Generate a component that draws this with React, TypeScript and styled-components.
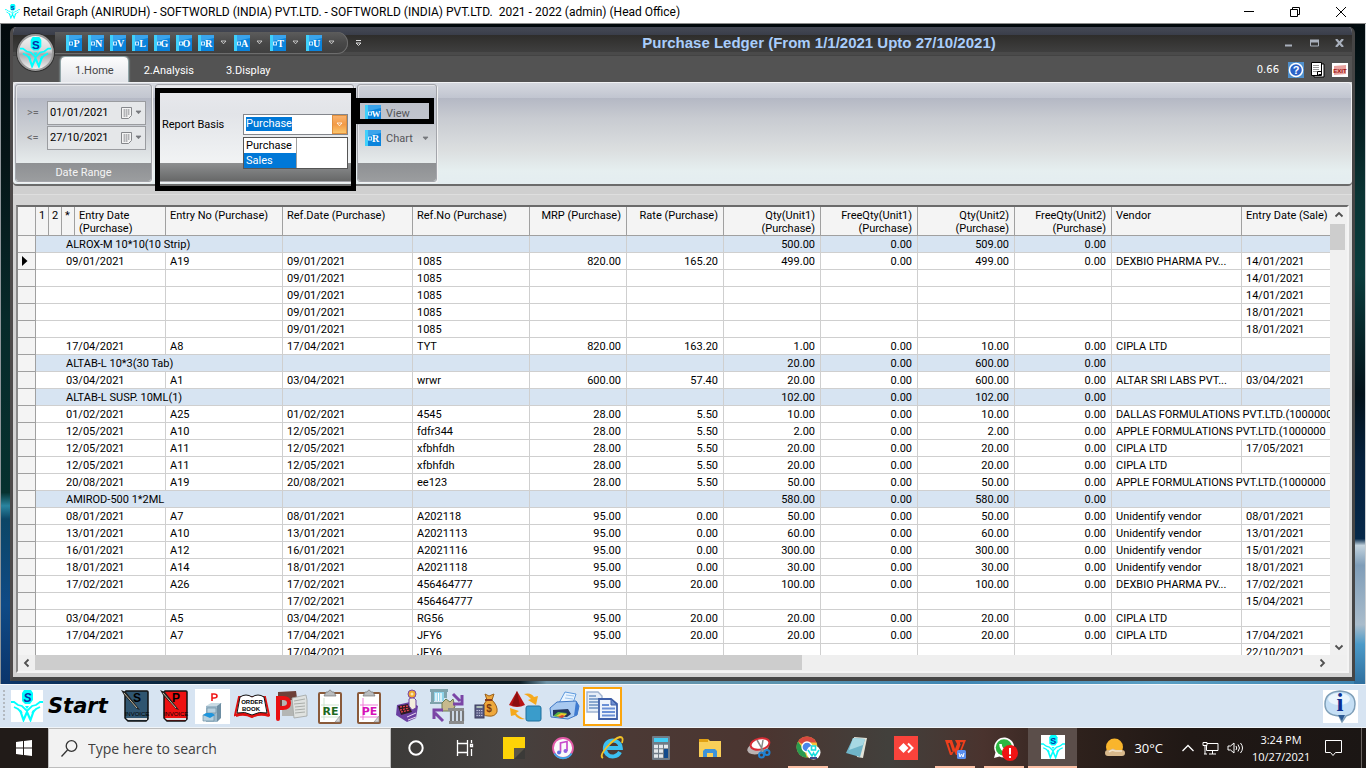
import React, { useEffect, useRef } from "react";
import styled, { createGlobalStyle, css } from "styled-components";

const GlobalStyle = createGlobalStyle`
  * { box-sizing: border-box; }
  body {
    margin: 0;
    font-family: Roboto, "Liberation Sans", sans-serif;
    font-size: 11px;
    color: #000;
  }
  button, input {
    font: inherit;
    color: inherit;
    margin: 0;
    padding: 0;
    border: 0;
    background: none;
  }
  svg { display: block; }
`;

const Desktop = styled.div`
  display: flex;
  flex-direction: column;
  height: 100vh;
  overflow: hidden;
`;

/* ---------- outer application window ---------- */

const AppTitleBar = styled.header`
  flex: none;
  display: flex;
  align-items: center;
  height: 24px;
  padding: 0 2px 0 5px;
  background: #fff;
  border-bottom: 1px solid #8a8a8a;
`;

const AppTitle = styled.h1`
  flex: 1;
  margin: 0;
  padding-left: 3px;
  font: 400 12px Roboto, "Open Sans", sans-serif;
  white-space: nowrap;
`;

const WindowButton = styled.button`
  display: grid;
  place-items: center;
  width: 46px;
  height: 22px;
`;

const MdiArea = styled.main`
  flex: 1;
  min-height: 0;
  display: flex;
  padding: 3px 10px 3px 9px;
  border-left: 1px solid #8d9499;
  border-right: 1px solid #c9cdd0;
  background:
    linear-gradient(#020b0e 0%, #04191c 12%, #0a3434 26%, #0a3c3c 38%, #062428 48%, #03121a 56%, #05203c 66%, #06294a 78%, #c3d3de 79%, #7f9db8 82%, #a9bccb 91%, #4b9ac8 94%, #2f6f9e 100%) right / 11px 100% no-repeat,
    linear-gradient(#020a0d 0%, #051517 20%, #072a2a 45%, #06312f 71%, #2a85a0 73%, #0c4666 75%, #0f4a86 88%, #0b356b 100%) left / 10px 100% no-repeat,
    linear-gradient(90deg, #0b356b 0%, #0a2438 14%, #06161e 30%, #0a1a22 38%, #6f94a8 40%, #5a94b0 58%, #3f86b4 70%, #5b9fc4 85%, #3c83b0 100%) bottom / 100% 3px no-repeat,
    #02090c;
`;

/* ---------- ledger window ---------- */

const LedgerWindow = styled.section`
  flex: 1;
  min-width: 0;
  display: flex;
  flex-direction: column;
  border: solid #454545;
  border-width: 0 3px 4px;
  border-left-color: #4d4a4a;
  border-radius: 6px 6px 0 0;
  background: #d3d3d3;
  overflow: hidden;
`;

const LedgerTitleBar = styled.div`
  position: relative;
  z-index: 1;
  flex: none;
  display: flex;
  align-items: center;
  height: 29px;
  margin: 0 -3px;
  padding: 2px 3px 0 45px;
  background: linear-gradient(#464a56 0, #3a3e4a 8px, #2e2d2b 8px, #3f3f3f 25px, #4a4a4a 25px, #4a4a4a 28px, #434343 28px);
`;

const Orb = styled.button`
  position: absolute;
  left: 7px;
  top: 7px;
  display: grid;
  place-items: center;
  width: 37px;
  height: 37px;
  border: 2px solid #9b9b9b;
  border-radius: 50%;
  background: linear-gradient(#f4f4f4 0, #d5d5d7 45%, #a9a9ad 55%, #f2f2f2 100%);
  box-shadow: 0 0 0 1px #2e2e2e;
`;

const QuickAccess = styled.div`
  display: flex;
  align-items: center;
  width: 293px;
  height: 22px;
  padding-left: 11px;
  border-radius: 0 12px 12px 0;
  background: linear-gradient(#5c5c5c, #484848 50%, #3f3f3f);
  box-shadow: inset 0 -1px 0 #6d6d6d, inset -1px 0 0 #6d6d6d;
`;

const QuickButton = styled.button<{ $menu?: boolean }>`
  display: flex;
  align-items: center;
  gap: 6px;
  width: ${(p) => (p.$menu ? 36 : 22)}px;
  height: 18px;
`;

const OverflowButton = styled.button`
  padding-left: 7px;
`;

const LedgerTitle = styled.h2`
  flex: 1;
  margin: 0;
  text-align: center;
  font: 700 15px "Liberation Sans", Arial, sans-serif;
  color: #a9cdfb;
  white-space: nowrap;
`;

const FrameButtons = styled.div`
  display: flex;
  width: 76px;
  justify-content: space-between;
`;

const FrameButton = styled.button`
  display: grid;
  place-items: center;
  width: 25px;
  height: 16px;
`;

const TabRow = styled.nav`
  flex: none;
  display: flex;
  align-items: stretch;
  height: 26px;
  padding: 1px 4px 0 48px;
  background: #535353;
`;

const Tab = styled.button<{ $active?: boolean }>`
  padding: 1px 16px 0;
  color: #fff;
  ${(p) =>
    p.$active &&
    css`
      padding: 1px 14px 0;
      color: #444;
      border-radius: 4px 4px 0 0;
      background: linear-gradient(#fdfdfd, #e3e5ea);
      box-shadow: 0 0 2px 1px #a7c3c6;
    `}
`;

const TabTools = styled.div`
  display: flex;
  align-items: center;
  gap: 6px;
  margin-left: auto;
  color: #fff;
  font: 10px "DejaVu Sans", sans-serif;
`;

const Version = styled.span`
  padding-right: 3px;
`;

const ToolButton = styled.button`
  width: 16px;
  height: 16px;
`;

const Ribbon = styled.div`
  position: relative;
  flex: none;
  display: flex;
  gap: 3px;
  height: 102px;
  padding: 1px 1px 2px;
  border: solid #f0f1f3;
  border-width: 1px 1px 0;
  border-radius: 4px;
  background: linear-gradient(#d5d8df 0, #c1c5d0 15px, #b4b8c4 15px, #c8cbd1 35px, #dcdfe0 68px, #e6eff0 88px, #e4edf0 100%);
  box-shadow: 0 2px 0 #6b6b6b;
`;

const RibbonGroup = styled.section<{ $w: number; $light?: boolean }>`
  position: relative;
  display: flex;
  flex-direction: column;
  width: ${(p) => p.$w}px;
  border: 1px solid #a3a5ab;
  border-radius: 3px;
  background: ${(p) =>
    p.$light
      ? "linear-gradient(#e9eaee, #e2e4e8 30%, #f1f3f4 80%)"
      : "linear-gradient(#d0d3da 0, #c2c6d0 13px, #b5b9c5 13px, #cfd2d6 50px, #e6ebec 78px)"};
  box-shadow: inset 1px 1px 0 #e3e4e8, 1px 1px 0 #f2f2f2;
`;

const GroupBody = styled.div`
  flex: 1;
  display: flex;
  flex-direction: column;
`;

const GroupCaption = styled.div<{ $dark?: boolean }>`
  flex: none;
  height: 18px;
  line-height: 19px;
  text-align: center;
  font-size: 11px;
  color: #f4f4f4;
  border-radius: 0 0 3px 3px;
  background: ${(p) => (p.$dark ? "linear-gradient(#8d8f90, #676868)" : "linear-gradient(#8e9093, #9b9d9f)")};
`;

const DateRows = styled.div`
  padding-top: 15px;
`;

const DateRow = styled.label`
  display: grid;
  grid-template-columns: 31px 99px;
  align-items: center;
  height: 25px;
  color: #6a6a6e;
`;

const Sign = styled.span`
  padding-left: 11px;
`;

const DateBox = styled.span`
  display: flex;
  align-items: center;
  height: 24px;
  border: 1px solid #9a9ca0;
  background: #e5e7e9;
`;

const DateInput = styled.input`
  width: 73px;
  padding-left: 2px;
  color: #000;
  outline: none;
`;

const CalendarButton = styled.button`
  display: flex;
  align-items: center;
  gap: 3px;
`;

const BasisLabel = styled.label`
  display: flex;
  align-items: center;
  justify-content: space-between;
  margin: 29px 5px 0 6px;
`;

const Combo = styled.span`
  position: relative;
  display: flex;
  width: 105px;
  height: 21px;
  border: 1px solid #83868c;
  background: #fff;
`;

const ComboInput = styled.input`
  flex: 1;
  min-width: 0;
  height: 14px;
  line-height: 14px;
  margin: 2px 0 0 2px;
  outline: none;
  &::selection { background: #0078d7; color: #fff; }
`;

const ComboArrow = styled.button`
  display: grid;
  place-items: center;
  width: 15px;
  background: linear-gradient(#f9b26d, #f39a45 50%, #fbc66c);
  border: 1px solid #e0903f;
`;

const ComboList = styled.ul`
  position: absolute;
  z-index: 3;
  top: 22px;
  left: -1px;
  width: 105px;
  margin: 0;
  padding: 0;
  list-style: none;
  border: 1px solid #555;
  background: linear-gradient(90deg, transparent 52px, #a0a0a0 52px, #a0a0a0 53px, transparent 53px) #fff;
`;

const ComboOption = styled.li<{ $selected?: boolean }>`
  width: 52px;
  height: 15px;
  line-height: 15px;
  padding-left: 2px;
  background: ${(p) => (p.$selected ? "#0078d7" : "transparent")};
  color: ${(p) => (p.$selected ? "#fff" : "#000")};
`;

const Commands = styled.div`
  display: flex;
  flex-direction: column;
  padding-top: 15px;
`;

const CommandButton = styled.button<{ $hot?: boolean }>`
  display: flex;
  align-items: center;
  gap: 5px;
  height: 25px;
  padding: 1px 0 0 7px;
  color: #55565a;
  background: ${(p) => (p.$hot ? "linear-gradient(#bcc0ca, #c3c6cf)" : "none")};
`;

const CommandArrow = styled.span`
  margin-left: 4px;
`;

/* thick marker frames laid over the ribbon */
const Marker = styled.span<{ $box: [number, number, number, number] }>`
  position: absolute;
  z-index: 2;
  pointer-events: none;
  border: 5px solid #000;
  left: ${(p) => p.$box[0]}px;
  top: ${(p) => p.$box[1]}px;
  width: ${(p) => p.$box[2]}px;
  height: ${(p) => p.$box[3]}px;
`;

/* ---------- data grid ---------- */

const GridPane = styled.div`
  flex: 1;
  min-height: 0;
  display: flex;
  margin-top: 2px;
  padding: 19px 3px 4px;
  background: linear-gradient(#cfcfcf 8px, #dedede 8px, #dedede 9px, #d3d3d3 9px);
`;

const GridFrame = styled.div`
  flex: 1;
  min-width: 0;
  display: grid;
  grid-template: minmax(0, 1fr) 16px / minmax(0, 1fr) 17px;
  border: 2px solid;
  border-color: #6b6b6b #f4f4f4 #f4f4f4 #8a8a8a;
  background: #efefef;
`;

const GridView = styled.div`
  overflow: hidden;
  background: #fff;
`;

const Table = styled.table`
  width: 1341px;
  table-layout: fixed;
  border-collapse: separate;
  border-spacing: 0;
  white-space: nowrap;
`;

const HeadCell = styled.th<{ $num?: boolean; $slim?: boolean }>`
  height: 29px;
  padding: ${(p) => (p.$slim ? "2px 2px 0 3px" : "2px 5px 0 4px")};
  vertical-align: top;
  text-align: ${(p) => (p.$num ? "right" : "left")};
  font-weight: 400;
  line-height: 13px;
  white-space: pre-line;
  background: #f4f4f4;
  border-right: 1px solid #a0a0a0;
  border-bottom: 1px solid #a0a0a0;
`;

const RowHead = styled.th`
  padding: 0 0 0 4px;
  background: #f4f4f4;
  border-right: 1px solid #a0a0a0;
  border-bottom: 1px solid #a0a0a0;
`;

const Row = styled.tr<{ $group?: boolean }>`
  background: ${(p) => (p.$group ? "#d7e4f2" : "#fff")};
`;

const Cell = styled.td<{ $num?: boolean; $first?: boolean }>`
  height: 17px;
  padding: 2px 5px 0 ${(p) => (p.$first ? 30 : 4)}px;
  line-height: 14px;
  text-align: ${(p) => (p.$num ? "right" : "left")};
  overflow: hidden;
  border-right: 1px solid #cfcfcf;
  border-bottom: 1px solid #cfcfcf;
`;

const VScroll = styled.div`
  display: flex;
  flex-direction: column;
  padding-right: 1px;
  background: #f0f0f0;
`;

const HScroll = styled.div`
  grid-column: 1 / -1;
  display: flex;
  padding-right: 17px;
  background: #efefef;
`;

const ScrollButton = styled.button`
  flex: none;
  display: grid;
  place-items: center;
  width: 17px;
  height: 16px;
`;

const VTrack = styled.div`
  flex: 1;
  padding-top: 1px;
`;

const HTrack = styled.div`
  flex: 1;
`;

const VThumb = styled.div`
  width: 15px;
  height: 26px;
  background: #cdcdcd;
`;

const HThumb = styled.div`
  width: 60%;
  height: 15px;
  background: #cdcdcd;
`;

/* ---------- shortcut bar and taskbar ---------- */

const ShortcutBar = styled.nav`
  flex: none;
  display: flex;
  align-items: center;
  height: 44px;
  padding: 0 8px 0 3px;
  background: #d7e4f2;
  border-top: 1px solid #f3f7fb;
  border-bottom: 1px solid #f0f4f8;
`;

const Grip = styled.span`
  width: 8px;
  height: 32px;
  background: repeating-linear-gradient(#b3b9c0 0 2px, transparent 2px 4px) left / 2px 100% no-repeat;
`;

const StartButton = styled.button`
  display: flex;
  align-items: center;
  gap: 5px;
  width: 104px;
  font: italic 700 21px "DejaVu Sans", Verdana, sans-serif;
`;

const Shortcut = styled.button<{ $on?: boolean }>`
  display: grid;
  place-items: center;
  width: 39px;
  height: 39px;
  ${(p) => p.$on && css`border: 2px solid #fba50e; background: #fdfdfd;`}
`;

const InfoButton = styled.button`
  margin-left: auto;
`;

const Taskbar = styled.footer`
  flex: none;
  display: flex;
  height: 40px;
  color: #fff;
  font-family: "Open Sans", "Noto Sans", sans-serif;
  background: linear-gradient(90deg, #211b18 0%, #211b18 4%, #3c3b39 28.6%, #45413f 37%, #4b3a36 44%, #4b3530 56%, #42403c 65%, #4a332e 72%, #2e211c 79%, #201815 87%, #1b1614 100%);
`;

const WinButton = styled.button`
  display: grid;
  place-items: center;
  width: 48px;
`;

const SearchBox = styled.label`
  display: flex;
  align-items: center;
  gap: 10px;
  width: 343px;
  padding-left: 12px;
  border: 1px solid #bdbdbd;
  background: #f2f2f2;
  color: #3c3c3c;
`;

const SearchInput = styled.input`
  flex: 1;
  font: 14px "Open Sans", "Noto Sans", sans-serif;
  outline: none;
  &::placeholder { color: #3f3f3f; opacity: 1; }
`;

const TaskButton = styled.button<{ $state?: "open" | "active" }>`
  display: grid;
  place-items: center;
  width: 49px;
  ${(p) =>
    p.$state === "open" &&
    css`background: linear-gradient(#fbbfa4, #fbbfa4) center bottom / 40px 2px no-repeat;`}
  ${(p) => p.$state === "active" && css`background: #5b4e4a; border-bottom: 2px solid #fbbfa4;`}
`;

const Tray = styled.div`
  flex: 1;
  display: flex;
  align-items: center;
  justify-content: flex-end;
  gap: 8px;
  padding-right: 4px;
`;

const TrayButton = styled.button<{ $wide?: boolean }>`
  display: flex;
  align-items: center;
  gap: 9px;
  padding-right: ${(p) => (p.$wide ? 11 : 0)}px;
  font-size: 13px;
`;

const Clock = styled.time`
  width: 58px;
  margin-right: 7px;
  text-align: center;
  font-size: 11px;
  line-height: 17px;
  white-space: nowrap;
`;

const ShowDesktop = styled.button`
  align-self: stretch;
  width: 1px;
  margin-left: 11px;
  background: #6a6461;
`;

/* ---------- drawings ---------- */

const Logo = ({ size, paper }: { size: number; paper?: boolean }) => (
  <svg width={size} height={size} viewBox="0 0 32 32" aria-hidden="true">
    {paper && <rect width="32" height="32" fill="#fff" />}
    <path d="M13 0h7l2 3v7l-3 4h-5l-3-3V3z" fill="#0ff" />
    <path d="M0 12h3l4 3 4 1 5 5 5-5 4-1 4-3h3M3 17l4 2 4 4M29 17l-4 2-4 4" fill="none" stroke="#0ff" strokeWidth="1.800" />
    <path d="M9 20l3.500 10L16 22l3.500 8L23 20" fill="none" stroke="#0ff" strokeWidth="2.200" />
    <path d="M14 16h4l-2 3z" fill="#0ff" />
    <text x="16.500" y="12" textAnchor="middle" fontFamily="Liberation Sans, sans-serif" fontWeight="700" fontSize="12" fill="#0a2fa8">S</text>
  </svg>
);

const BlueIcon = ({ letter }: { letter: string }) => (
  <svg width="16" height="16" viewBox="0 0 16 16" aria-hidden="true">
    <rect width="16" height="16" fill="#0b84dc" />
    <rect width="3" height="16" fill="#3fd0fb" />
    <path d="M3 0h13v3L3 6z" fill="#3aa4ec" />
    <rect x="3.500" y="7" width="3" height="3" fill="none" stroke="#cfeaff" strokeWidth="1" />
    <text x={letter === "W" ? 11 : 10.5} y="11.500" textAnchor="middle" fontFamily="Liberation Serif, serif" fontWeight="700" fontSize={letter === "W" ? 9 : 10} fill="#fff">{letter}</text>
  </svg>
);

const Caret = ({ color = "#ddd", hollow }: { color?: string; hollow?: boolean }) => (
  <svg width="7" height="5" viewBox="0 0 7 5" aria-hidden="true">
    <path d="M1 1h5L3.500 3.800z" fill={hollow ? "none" : color} stroke={color} strokeWidth="0.800" />
  </svg>
);

const Chevron = ({ dir }: { dir: "up" | "down" | "left" | "right" }) => {
  const turn = { up: 0, right: 90, down: 180, left: 270 }[dir];
  return (
    <svg width="10" height="10" viewBox="0 0 10 10" aria-hidden="true">
      <path d="M1.500 6.500L5 3l3.500 3.500" fill="none" stroke="#505050" strokeWidth="1.800" transform={`rotate(${turn} 5 5)`} />
    </svg>
  );
};

const Calendar = () => (
  <svg width="11" height="12" viewBox="0 0 11 12" aria-hidden="true">
    <path d="M.5.500h10v8l-3 3h-7z" fill="#f3f3f3" stroke="#85878b" />
    <path d="M2 3h7M2 5h7M2 7h7M2 9h5M3.500 2v8M5.500 2v8M7.500 2v6" stroke="#a9abaf" strokeWidth=".8" />
  </svg>
);

const Invoice = ({ fill, letter, ink }: { fill: string; letter: string; ink: string }) => (
  <svg width="30" height="34" viewBox="0 0 30 34">
    <path d="M6 2h21q1 0 1 1v27l-2 2H8l-3-3V3z" fill={fill} stroke="#111" strokeWidth="1.500" />
    <path d="M6 29h21v2H8z" fill="#ddd" />
    <text x="17" y="13" textAnchor="middle" fontFamily="Liberation Sans, sans-serif" fontWeight="700" fontSize="12" fill={ink}>{letter}</text>
    <text x="17" y="27" textAnchor="middle" fontFamily="Liberation Sans, sans-serif" fontSize="6" fill="#000">INVOICE</text>
    <path d="M1 1l5 2 14 18-3-1L4 6z" fill="#222" />
    <path d="M4 4l13 15" stroke="#c9bfa4" strokeWidth="1" />
  </svg>
);

const Clipboard = ({ label, ink, line }: { label: string; ink: string; line: string }) => (
  <svg width="24" height="35" viewBox="0 0 24 35">
    <rect x="1" y="4" width="22" height="30" rx="1" fill="#fff" stroke="#8a5a3a" strokeWidth="2" />
    <path d="M6 7l2-4h2q2-4 4 0h2l2 4z" fill="#b9bcbe" stroke="#777" strokeWidth=".7" />
    <path d="M3 16h18M3 28h18M6 9v22" stroke={line} strokeWidth="1" />
    <path d="M17 33l5-6v6z" fill="#d5d5d5" stroke="#888" strokeWidth=".6" />
    <text x="12.500" y="26" textAnchor="middle" fontFamily="DejaVu Sans, sans-serif" fontWeight="700" fontSize="11" fill={ink}>{label}</text>
  </svg>
);

const CabinetIcon = () => (
  <svg width="35" height="35" viewBox="0 0 35 35">
    <rect width="35" height="35" fill="#fff" />
    <path d="M11 17l5-3h11l-3 3z" fill="#c9dbe4" />
    <path d="M22 17l4-3v15l-4 4z" fill="#6d8ea3" />
    <path d="M11 17h11v16H11z" fill="#9db9ca" />
    <path d="M12 19h9v5h-9zM8 26h11v6H8z" fill="#b7d0de" stroke="#6f8fa3" strokeWidth=".7" />
    <path d="M8 26l3-2h6l3 2-5 3z" fill="#1f95dc" />
    <path d="M17 12V5h2q3 0 3 2t-3 2h-2" fill="none" stroke="#f01818" strokeWidth="1.600" />
  </svg>
);

const OrderBook = () => (
  <svg width="36" height="24" viewBox="0 0 36 24">
    <path d="M5 3L1 21q8-3 17 1 9-4 17-1L31 3z" fill="#fff" stroke="#e01010" strokeWidth="2" />
    <path d="M6 3q6-4 12 0 6-4 12 0l3 16q-8-2-15 2-7-4-15-2z" fill="#fff" stroke="#111" strokeWidth="1" />
    <text x="18" y="10" textAnchor="middle" fontFamily="Liberation Sans, sans-serif" fontWeight="700" fontSize="6" fill="#000">ORDER</text>
    <text x="17" y="17" textAnchor="middle" fontFamily="Liberation Sans, sans-serif" fontWeight="700" fontSize="6" fill="#000">BOOK</text>
    <path d="M2 22q8-3 16 1 8-4 17-1" fill="none" stroke="#e01010" strokeWidth="2" />
  </svg>
);

const PurchaseIcon = () => (
  <svg width="34" height="30" viewBox="0 0 34 30">
    <path d="M4 1l18-1 1 7-5 1v8H4z" fill="#6e4038" />
    <path d="M8 9h12v16H8z" fill="#b4b6b4" />
    <path d="M18 7l14-3 1 5v16l-13 2z" fill="#dfe2e0" stroke="#9fa3a1" strokeWidth=".8" />
    <path d="M20 10l11-2M20 13l11-1M21 16l10-1M21 19l10-1M21 22l10-1" stroke="#a9ada9" />
    <path d="M4 28V7h5q6 0 6 5t-6 5H5" fill="none" stroke="#e90f12" strokeWidth="4" strokeLinecap="round" />
  </svg>
);

const RegisterIcon = () => (
  <svg width="25" height="34" viewBox="0 0 25 34">
    <path d="M2 16l13-3 8 4-2 12-9 4L1 26z" fill="#6a3fa0" />
    <path d="M3 17l10-2 4 8-11 3z" fill="#2c1a22" />
    <path d="M5 18l8-1M5 21l9-2M6 23l9-2" stroke="#e2434c" strokeWidth="1.300" strokeDasharray="2 1" />
    <path d="M12 28l9-4M13 31l8-3" stroke="#e7d5ef" />
    <path d="M14 10q4-3 7 1v8l-4 2-3-4z" fill="#f3eedd" stroke="#6a3fa0" />
    <circle cx="17" cy="5" r="4" fill="#f1a92e" stroke="#7a45a4" />
    <circle cx="17" cy="5" r="1.500" fill="#f7e6b0" />
  </svg>
);

const TransferIcon = () => (
  <svg width="36" height="36" viewBox="0 0 36 36">
    <path d="M1 1h18v3H1zM2 4h3v11H2zM15 4h3v6h-3zM1 14h12v2H1z" fill="#7fa3ac" />
    <path d="M5 4h10v9H5z" fill="#8ed3ea" />
    <path d="M7 5v8M9.500 5v8M12 5v8" stroke="#fff" strokeWidth="1.300" />
    <path d="M13 15l4-4 4 3 3-3 2 8-5 4h-8z" fill="#c7b98d" stroke="#6d7c50" />
    <path d="M24 6l7 7M33 7v9h-9M14 33l-8-8M5 31v-9h9" fill="none" stroke="#7b45a6" strokeWidth="3" />
    <path d="M19 20h16v3H19zM20 33h15v3H20z" fill="#8c8c8c" />
    <path d="M22 23v10M26 23v10M30 23v10M34 23v10" stroke="#777" strokeWidth="2.200" />
  </svg>
);

const MoneyIcon = () => (
  <svg width="24" height="26" viewBox="0 0 24 26">
    <path d="M11 1l4 2 5-2-2 6q6 6 5 12-2 5-9 4-6 0-6-6 1-6 5-10z" fill="#efa83c" stroke="#9a611c" />
    <path d="M11 7h7" stroke="#8a3d1a" strokeWidth="2" />
    <text x="15" y="19" textAnchor="middle" fontFamily="Liberation Sans, sans-serif" fontWeight="700" fontSize="10" fill="#7c3a10">$</text>
    <rect x="1" y="12" width="9" height="13" fill="#5a5d86" stroke="#3b3d5c" />
    <path d="M2.500 14h6" stroke="#c4dbc4" strokeWidth="1.600" />
    <path d="M2.500 17.500h6M2.500 20h6M2.500 22.500h6" stroke="#c8cae0" strokeDasharray="1.300 1" />
  </svg>
);

const ShapesIcon = () => (
  <svg width="34" height="32" viewBox="0 0 34 32">
    <path d="M9 1l8 14q-8 4-16 0z" fill="#b91414" />
    <path d="M9 1l3 15q-6 1-8-1z" fill="#8a0f0f" />
    <rect x="18" y="16" width="15" height="15" rx="2" fill="#3a9ccb" stroke="#1f6f9c" />
    <path d="M16 4q7-2 10 3l4-1-2 9-8-5 3-1q-2-3-7-5z" fill="#f5a91c" />
    <path d="M17 29q-7 1-10-4l-4 1-1-8 9 3-3 2q3 4 9 6z" fill="#f5a91c" />
  </svg>
);

const PrinterIcon = () => (
  <svg width="32" height="30" viewBox="0 0 32 30">
    <path d="M11 12L17 1l11 2-4 12z" fill="#e9f4ff" stroke="#5e9ade" />
    <path d="M2 17l7-6 19-1 3 5-2 9-9 4-17-2z" fill="#a8c9f0" stroke="#3f77c4" />
    <path d="M28 10l3 5-2 9-3 1z" fill="#3e7ad0" />
    <path d="M5 19l15-1 3 5-4 3-14-1z" fill="#22345c" />
    <path d="M5 25l5-4 9 1-4 5z" fill="#58b347" />
    <path d="M8 25l5-3 6 1-4 3z" fill="#f0c52c" />
    <path d="M10 26l4-2 3 1-3 2z" fill="#d43d3d" />
    <path d="M18 4l8 1M17 7l8 1" stroke="#9cc3ec" />
  </svg>
);

const CopyIcon = () => (
  <svg width="33" height="30" viewBox="0 0 33 30">
    <path d="M1 1h11l4 4v16H1z" fill="#e6eef8" stroke="#9fb2cf" strokeWidth="1.400" />
    <path d="M3 5h7M3 8h10M3 11h10M3 14h9M3 17h9" stroke="#8aa8cf" strokeWidth="1.800" />
    <path d="M13 8h12l6 5v15H13z" fill="#eef4fc" stroke="#3f5fa8" strokeWidth="1.800" />
    <path d="M25 8v6h6z" fill="#6f8fd0" stroke="#3f5fa8" />
    <path d="M16 14h7M16 17.500h13M16 21h13M16 24.500h13" stroke="#6a90d6" strokeWidth="2.200" />
  </svg>
);

const InfoIcon = () => (
  <svg width="35" height="33" viewBox="0 0 35 33">
    <rect width="35" height="33" fill="#fff" />
    <path d="M17 1q15 1 15 13 0 10-9 12l-4 6-3-6Q2 25 2 14 2 2 17 1z" fill="#c5dff5" stroke="#7f9fb8" strokeWidth="1.500" />
    <path d="M15 25h7l-3 6z" fill="#2c5b94" />
    <ellipse cx="16" cy="9" rx="11" ry="6" fill="#eaf5fd" />
    <text x="17" y="21" textAnchor="middle" fontFamily="Liberation Serif, serif" fontWeight="700" fontSize="25" fill="#0c2f92">i</text>
  </svg>
);

const HelpIcon = () => (
  <svg width="16" height="16" viewBox="0 0 16 16">
    <rect width="16" height="16" fill="#4f8fcb" />
    <circle cx="8" cy="8" r="6.500" fill="#2a62c8" stroke="#fff" strokeWidth="1.500" />
    <text x="8" y="12" textAnchor="middle" fontFamily="Liberation Sans, sans-serif" fontWeight="700" fontSize="11" fill="#fff">?</text>
  </svg>
);

const PagesIcon = () => (
  <svg width="15" height="16" viewBox="0 0 15 16">
    <path d="M4 2h10v13H4z" fill="#fff" stroke="#000" />
    <path d="M1.500.500h10v13h-10z" fill="#fff" stroke="#000" />
    <path d="M3 3.500h6M3 5.500h6M3 7.500h6M3 9.500h4" stroke="#999" />
    <path d="M7.500 13.500v-4h4v3h-3" fill="none" stroke="#000" />
  </svg>
);

const ExitIcon = () => (
  <svg width="16" height="14" viewBox="0 0 16 14">
    <rect width="16" height="14" fill="#fff" />
    <path d="M2 3l12-1v9l-12 1z" fill="#e9a3a0" />
    <text x="8" y="9.500" textAnchor="middle" fontFamily="Liberation Sans, sans-serif" fontWeight="700" fontSize="6" fill="#a01414">EXIT</text>
  </svg>
);

const TaskIcon = ({ name }: { name: string }) => {
  const art: Record<string, React.ReactNode> = {
    Cortana: <circle cx="12" cy="12" r="6.700" fill="none" stroke="#fff" strokeWidth="2" />,
    "Task View": (
      <path d="M4.500 4v3.500h10V4M4.500 20v-3.500h10V20M4.500 7.500v9M14.500 7.500v9M18.500 4v3M18.500 13v7M17.500 8.500h2v2h-2z" fill="none" stroke="#fff" strokeWidth="1.300" />
    ),
    "Sticky Notes": (
      <>
        <path d="M1 1h22v11l-11 11H1z" fill="#fdd307" />
        <path d="M12 12h11v11H12z" fill="#3b3a38" />
        <path d="M12 12h11L12 23z" fill="#5a5548" />
      </>
    ),
    iTunes: (
      <>
        <circle cx="12" cy="12" r="10" fill="#fafafa" stroke="#e25aa8" strokeWidth="1.800" />
        <path d="M3.500 17.500A10 10 0 0020.500 17.500" fill="none" stroke="#38a8e8" strokeWidth="1.800" />
        <path d="M9.500 16.500V7l6.500-1.500v9.500" fill="none" stroke="#c84ccc" strokeWidth="1.700" />
        <circle cx="8" cy="16.500" r="2" fill="#5f6fe0" />
        <circle cx="14.500" cy="15" r="2" fill="#8f5fe0" />
      </>
    ),
    "Internet Explorer": (
      <>
        <path d="M20 16a8 8 0 11.800-4H7" fill="none" stroke="#3cc0f2" strokeWidth="4" />
        <path d="M3 22Q-1 20 7 11T20 1q4 0 2 6" fill="none" stroke="#f5c426" strokeWidth="1.800" />
      </>
    ),
    Calculator: (
      <>
        <rect x="3" width="18" height="24" rx="1" fill="#6f7b87" />
        <rect x="5" y="2" width="14" height="4" fill="#43cdf5" />
        <path d="M5 10.500h14M5 15h14M5 20h14" stroke="#e3e8ec" strokeWidth="3.600" strokeDasharray="4 1" />
        <rect x="15" y="13" width="4" height="9" fill="#114a8c" />
      </>
    ),
    "File Explorer": (
      <>
        <path d="M1 3h9l2 2h11v16H1z" fill="#f9cf58" />
        <path d="M1 3h9v3H1z" fill="#e1a113" />
        <path d="M5 21v-6l2-2h10l2 2v6h-4v-4H9v4z" fill="#3d93d9" />
      </>
    ),
    "Snipping Tool": (
      <>
        <ellipse cx="11" cy="12" rx="11" ry="6" fill="#b9b2b2" transform="rotate(-15 11 12)" />
        <ellipse cx="13" cy="8" rx="9.500" ry="5.500" fill="#fff" stroke="#d82c35" strokeWidth="2" transform="rotate(-12 13 8)" />
        <path d="M10 4l7 12M16 4l-2 12" stroke="#888" strokeWidth="1.500" />
        <circle cx="14.500" cy="19" r="2.500" fill="none" stroke="#2183d2" strokeWidth="2" />
        <circle cx="20" cy="16.500" r="2.500" fill="none" stroke="#2183d2" strokeWidth="2" />
      </>
    ),
    Chrome: (
      <>
        <circle cx="11" cy="11" r="10.500" fill="#f4c33a" />
        <path d="M11 11L2 5.500A10.500 10.500 0 0120.500 6.500H11z" fill="#d8493f" />
        <path d="M2 5.500L8 14l3 7.500A10.500 10.500 0 012 5.500z" fill="#2a9a50" />
        <circle cx="11" cy="11" r="5" fill="#4a86ea" stroke="#fff" strokeWidth="1.300" />
        <circle cx="17.500" cy="16.500" r="7" fill="#fff" />
        <path d="M15.500 10h4v4h-4zM12 14l4 6 1.500-3 1.500 3 4-6" fill="none" stroke="#17dede" strokeWidth="1.600" />
        <path d="M14 22h7" stroke="#0f1c6a" strokeWidth="1.600" />
      </>
    ),
    Notepad: (
      <>
        <path d="M9 1l13 1-4 20-6-1z" fill="#e2e3d8" />
        <path d="M8 2l12 1-5 18-14-4z" fill="#6fb5c9" />
        <path d="M8 2l12 1-2 6L4 14z" fill="#a8d9e4" />
      </>
    ),
    AnyDesk: (
      <>
        <rect width="24" height="24" fill="#f9433b" />
        <path d="M9.500 7l5 5-5 5-5-5z" fill="#fff" />
        <path d="M14 7.500l4.500 4.500-4.500 4.500" fill="none" stroke="#fff" strokeWidth="2" />
      </>
    ),
    WPS: (
      <>
        <path d="M2 4h7l3 9 2-5-2-4h11l-6 15h-4l-2-4-2 4H7z" fill="#ee3f1c" />
        <path d="M6 7l3 9M17 7h2l-3 8" fill="none" stroke="#4a332e" strokeWidth="1.600" />
        <rect x="14" y="14" width="9" height="9" rx="1.500" fill="#5a8ff0" />
        <path d="M16 17l1 4 1.500-3 1.500 3 1-4" fill="none" stroke="#fff" />
      </>
    ),
    WhatsApp: (
      <>
        <path d="M2 22l1.500-5.500A10 10 0 1112 21.500q-3 0-4.500-1z" fill="#fff" />
        <circle cx="12" cy="11.500" r="8.300" fill="#2bb741" />
        <path d="M8.500 8q0 6 6.500 7.500" fill="none" stroke="#fff" strokeWidth="2.600" />
        <circle cx="18" cy="17" r="8" fill="#f01414" />
        <path d="M18 12v6.500M18 20v2" stroke="#fff" strokeWidth="2" />
      </>
    ),
  };
  return (
    <svg width="24" height="24" viewBox="0 0 24 24" overflow="visible" aria-hidden="true">
      {art[name]}
    </svg>
  );
};

/* ---------- data ---------- */

const columnWidths = [18, 13, 13, 13, 91, 117, 130, 117, 97, 97, 97, 97, 97, 97, 130, 117];

const headings: { text: string; num?: boolean; slim?: boolean }[] = [
  { text: "1", slim: true },
  { text: "2", slim: true },
  { text: "*", slim: true },
  { text: "Entry Date\n(Purchase)" },
  { text: "Entry No (Purchase)" },
  { text: "Ref.Date (Purchase)" },
  { text: "Ref.No (Purchase)" },
  { text: "MRP (Purchase)", num: true },
  { text: "Rate (Purchase)", num: true },
  { text: "Qty(Unit1)\n(Purchase)", num: true },
  { text: "FreeQty(Unit1)\n(Purchase)", num: true },
  { text: "Qty(Unit2)\n(Purchase)", num: true },
  { text: "FreeQty(Unit2)\n(Purchase)", num: true },
  { text: "Vendor" },
  { text: "Entry Date (Sale)" },
];

type Entry = { item: string; total: string[] } | string[];

const follow = (ref: string, no: string, sale: string): string[] => ["", "", ref, no, "", "", "", "", "", "", "", sale];

const entries: Entry[] = [
  { item: "ALROX-M 10*10(10 Strip)", total: ["500.00", "0.00", "509.00", "0.00"] },
  ["09/01/2021", "A19", "09/01/2021", "1085", "820.00", "165.20", "499.00", "0.00", "499.00", "0.00", "DEXBIO PHARMA PV...", "14/01/2021"],
  follow("09/01/2021", "1085", "14/01/2021"),
  follow("09/01/2021", "1085", "14/01/2021"),
  follow("09/01/2021", "1085", "18/01/2021"),
  follow("09/01/2021", "1085", "18/01/2021"),
  ["17/04/2021", "A8", "17/04/2021", "TYT", "820.00", "163.20", "1.00", "0.00", "10.00", "0.00", "CIPLA LTD", ""],
  { item: "ALTAB-L 10*3(30 Tab)", total: ["20.00", "0.00", "600.00", "0.00"] },
  ["03/04/2021", "A1", "03/04/2021", "wrwr", "600.00", "57.40", "20.00", "0.00", "600.00", "0.00", "ALTAR SRI LABS PVT...", "03/04/2021"],
  { item: "ALTAB-L SUSP. 10ML(1)", total: ["102.00", "0.00", "102.00", "0.00"] },
  ["01/02/2021", "A25", "01/02/2021", "4545", "28.00", "5.50", "10.00", "0.00", "10.00", "0.00", "DALLAS FORMULATIONS PVT.LTD.(1000000"],
  ["12/05/2021", "A10", "12/05/2021", "fdfr344", "28.00", "5.50", "2.00", "0.00", "2.00", "0.00", "APPLE FORMULATIONS PVT.LTD.(1000000"],
  ["12/05/2021", "A11", "12/05/2021", "xfbhfdh", "28.00", "5.50", "20.00", "0.00", "20.00", "0.00", "CIPLA LTD", "17/05/2021"],
  ["12/05/2021", "A11", "12/05/2021", "xfbhfdh", "28.00", "5.50", "20.00", "0.00", "20.00", "0.00", "CIPLA LTD", ""],
  ["20/08/2021", "A19", "20/08/2021", "ee123", "28.00", "5.50", "50.00", "0.00", "50.00", "0.00", "APPLE FORMULATIONS PVT.LTD.(1000000"],
  { item: "AMIROD-500 1*2ML", total: ["580.00", "0.00", "580.00", "0.00"] },
  ["08/01/2021", "A7", "08/01/2021", "A202118", "95.00", "0.00", "50.00", "0.00", "50.00", "0.00", "Unidentify vendor", "08/01/2021"],
  ["13/01/2021", "A10", "13/01/2021", "A2021113", "95.00", "0.00", "60.00", "0.00", "60.00", "0.00", "Unidentify vendor", "13/01/2021"],
  ["16/01/2021", "A12", "16/01/2021", "A2021116", "95.00", "0.00", "300.00", "0.00", "300.00", "0.00", "Unidentify vendor", "15/01/2021"],
  ["18/01/2021", "A14", "18/01/2021", "A2021118", "95.00", "0.00", "30.00", "0.00", "30.00", "0.00", "Unidentify vendor", "18/01/2021"],
  ["17/02/2021", "A26", "17/02/2021", "456464777", "95.00", "20.00", "100.00", "0.00", "100.00", "0.00", "DEXBIO PHARMA PV...", "17/02/2021"],
  follow("17/02/2021", "456464777", "15/04/2021"),
  ["03/04/2021", "A5", "03/04/2021", "RG56", "95.00", "20.00", "20.00", "0.00", "20.00", "0.00", "CIPLA LTD", ""],
  ["17/04/2021", "A7", "17/04/2021", "JFY6", "95.00", "20.00", "20.00", "0.00", "20.00", "0.00", "CIPLA LTD", "17/04/2021"],
  follow("17/04/2021", "JFY6", "22/10/2021"),
];

const isNumeric = (i: number) => i >= 4 && i <= 9;

const CurrentRowMark = () => (
  <svg width="6" height="10" viewBox="0 0 6 10" aria-hidden="true">
    <path d="M0 0l5.500 5L0 10z" fill="#000" />
  </svg>
);

const LedgerRow = ({ entry, current }: { entry: Entry; current: boolean }) => {
  if (!Array.isArray(entry)) {
    return (
      <Row $group>
        <RowHead scope="row" />
        <Cell $first colSpan={5}>{entry.item}</Cell>
        <Cell /><Cell /><Cell /><Cell />
        {entry.total.map((t, i) => <Cell key={i} $num>{t}</Cell>)}
        <Cell /><Cell />
      </Row>
    );
  }
  return (
    <Row>
      <RowHead scope="row">{current && <CurrentRowMark />}</RowHead>
      {entry.map((value, i) => (
        <Cell
          key={i}
          $first={i === 0}
          $num={isNumeric(i)}
          colSpan={i === 0 ? 4 : i === 10 && entry.length === 11 ? 2 : 1}
        >
          {value}
        </Cell>
      ))}
    </Row>
  );
};

const DateField = ({ sign, value }: { sign: string; value: string }) => (
  <DateRow>
    <Sign>{sign}</Sign>
    <DateBox>
      <DateInput defaultValue={value} />
      <CalendarButton aria-label="Open calendar">
        <Calendar />
        <Caret color="#77797d" />
      </CalendarButton>
    </DateBox>
  </DateRow>
);

const shortcuts: { name: string; icon: React.ReactNode }[] = [
  { name: "Sales invoice", icon: <Invoice fill="#2f5570" letter="S" ink="#000" /> },
  { name: "Purchase invoice", icon: <Invoice fill="#ee1111" letter="P" ink="#000" /> },
  { name: "Purchase register", icon: <CabinetIcon /> },
  { name: "Order book", icon: <OrderBook /> },
  { name: "Purchase report", icon: <PurchaseIcon /> },
  { name: "Receipt entry", icon: <Clipboard label="RE" ink="#1f6a1f" line="#cfe3cf" /> },
  { name: "Payment entry", icon: <Clipboard label="PE" ink="#d611b8" line="#f07ad8" /> },
  { name: "Billing counter", icon: <RegisterIcon /> },
  { name: "Bank transfer", icon: <TransferIcon /> },
  { name: "Accounts", icon: <MoneyIcon /> },
  { name: "Convert", icon: <ShapesIcon /> },
  { name: "Print", icon: <PrinterIcon /> },
  { name: "Copy", icon: <CopyIcon /> },
];

const tasks: { name: string; state?: "open" | "active" }[] = [
  { name: "Cortana" },
  { name: "Task View" },
  { name: "Sticky Notes" },
  { name: "iTunes" },
  { name: "Internet Explorer" },
  { name: "Calculator" },
  { name: "File Explorer" },
  { name: "Snipping Tool" },
  { name: "Chrome", state: "open" },
  { name: "Notepad" },
  { name: "AnyDesk" },
  { name: "WPS", state: "open" },
  { name: "WhatsApp", state: "open" },
  { name: "Retail Graph", state: "active" },
];

export default function App() {
  const basis = useRef<HTMLInputElement>(null);
  useEffect(() => {
    basis.current?.focus();
    basis.current?.select();
  }, []);

  return (
    <Desktop>
      <GlobalStyle />
      <AppTitleBar>
        <Logo size={15} />
        <AppTitle>
          Retail Graph (ANIRUDH) - SOFTWORLD (INDIA) PVT.LTD. - SOFTWORLD (INDIA) PVT.LTD.&nbsp; 2021 - 2022 (admin) (Head Office)
        </AppTitle>
        <WindowButton aria-label="Minimize">
          <svg width="10" height="10"><path d="M0 4.500h10" stroke="#000" /></svg>
        </WindowButton>
        <WindowButton aria-label="Restore">
          <svg width="10" height="10"><path d="M.5 2.500h7v7h-7zM2.500 2V.500h7v7H8" fill="none" stroke="#000" /></svg>
        </WindowButton>
        <WindowButton aria-label="Close">
          <svg width="10" height="10"><path d="M0 0l10 10M10 0L0 10" stroke="#000" /></svg>
        </WindowButton>
      </AppTitleBar>

      <MdiArea>
        <LedgerWindow>
          <LedgerTitleBar>
            <Orb aria-label="Application menu"><Logo size={31} /></Orb>
            <QuickAccess>
              {["P", "N", "V", "L", "G", "O"].map((l) => (
                <QuickButton key={l} aria-label={l}><BlueIcon letter={l} /></QuickButton>
              ))}
              {["R", "A", "T", "U"].map((l) => (
                <QuickButton key={l} $menu aria-label={l}><BlueIcon letter={l} /><Caret hollow /></QuickButton>
              ))}
            </QuickAccess>
            <OverflowButton aria-label="More commands">
              <svg width="7" height="8"><path d="M1 1.500h5M1 4h5L3.500 6.500z" fill="none" stroke="#ddd" /></svg>
            </OverflowButton>
            <LedgerTitle>Purchase Ledger (From 1/1/2021 Upto 27/10/2021)</LedgerTitle>
            <FrameButtons>
              <FrameButton aria-label="Minimize ledger">
                <svg width="8" height="8"><path d="M0 6.500h7" stroke="#a9b0bc" strokeWidth="2" /></svg>
              </FrameButton>
              <FrameButton aria-label="Maximize ledger">
                <svg width="9" height="8"><path d="M.5 1v6h8V1" fill="none" stroke="#a9b0bc" /><path d="M0 2h9" stroke="#a9b0bc" strokeWidth="3" /></svg>
              </FrameButton>
              <FrameButton aria-label="Close ledger">
                <svg width="9" height="8"><path d="M1 0l7 8M8 0L1 8" stroke="#a9b0bc" strokeWidth="2.200" /></svg>
              </FrameButton>
            </FrameButtons>
          </LedgerTitleBar>

          <TabRow>
            <Tab $active>1.Home</Tab>
            <Tab>2.Analysis</Tab>
            <Tab>3.Display</Tab>
            <TabTools>
              <Version>0.66</Version>
              <ToolButton aria-label="Help"><HelpIcon /></ToolButton>
              <ToolButton aria-label="Pages"><PagesIcon /></ToolButton>
              <ToolButton aria-label="Exit"><ExitIcon /></ToolButton>
            </TabTools>
          </TabRow>

          <Ribbon>
            <RibbonGroup $w={137}>
              <GroupBody>
                <DateRows>
                  <DateField sign=">=" value="01/01/2021" />
                  <DateField sign="<=" value="27/10/2021" />
                </DateRows>
              </GroupBody>
              <GroupCaption>Date Range</GroupCaption>
            </RibbonGroup>

            <RibbonGroup $w={199} $light>
              <GroupBody>
                <BasisLabel>
                  Report Basis
                  <Combo>
                    <ComboInput ref={basis} role="combobox" aria-expanded="true" aria-controls="basis-list" defaultValue="Purchase" />
                    <ComboArrow aria-label="Toggle list" tabIndex={-1}><Caret color="#fff" hollow /></ComboArrow>
                    <ComboList id="basis-list" role="listbox">
                      <ComboOption role="option" aria-selected="false">Purchase</ComboOption>
                      <ComboOption role="option" aria-selected="true" $selected>Sales</ComboOption>
                    </ComboList>
                  </Combo>
                </BasisLabel>
              </GroupBody>
              <GroupCaption $dark />
              <Marker $box={[-1, 3, 201, 103]} />
            </RibbonGroup>

            <RibbonGroup $w={80}>
              <GroupBody>
                <Commands>
                  <CommandButton $hot><BlueIcon letter="W" />View</CommandButton>
                  <CommandButton>
                    <BlueIcon letter="R" />Chart
                    <CommandArrow><Caret color="#77797d" /></CommandArrow>
                  </CommandButton>
                </Commands>
              </GroupBody>
              <GroupCaption />
              <Marker $box={[-3, 13, 79, 26]} />
            </RibbonGroup>
          </Ribbon>

          <GridPane>
            <GridFrame>
              <GridView>
                <Table>
                  <colgroup>
                    {columnWidths.map((w, i) => <col key={i} width={w} />)}
                  </colgroup>
                  <thead>
                    <tr>
                      <HeadCell aria-label="Row" />
                      {headings.map((h) => (
                        <HeadCell key={h.text} scope="col" $num={h.num} $slim={h.slim}>{h.text}</HeadCell>
                      ))}
                    </tr>
                  </thead>
                  <tbody>
                    {entries.map((e, i) => <LedgerRow key={i} entry={e} current={i === 1} />)}
                  </tbody>
                </Table>
              </GridView>
              <VScroll>
                <ScrollButton aria-label="Scroll up"><Chevron dir="up" /></ScrollButton>
                <VTrack><VThumb /></VTrack>
                <ScrollButton aria-label="Scroll down"><Chevron dir="down" /></ScrollButton>
              </VScroll>
              <HScroll>
                <ScrollButton aria-label="Scroll left"><Chevron dir="left" /></ScrollButton>
                <HTrack><HThumb /></HTrack>
                <ScrollButton aria-label="Scroll right"><Chevron dir="right" /></ScrollButton>
              </HScroll>
            </GridFrame>
          </GridPane>
        </LedgerWindow>
      </MdiArea>

      <ShortcutBar>
        <Grip />
        <StartButton><Logo size={32} paper />Start</StartButton>
        {shortcuts.map((s, i) => (
          <Shortcut key={s.name} aria-label={s.name} $on={i === shortcuts.length - 1}>{s.icon}</Shortcut>
        ))}
        <InfoButton aria-label="Information"><InfoIcon /></InfoButton>
      </ShortcutBar>

      <Taskbar>
        <WinButton aria-label="Start menu">
          <svg width="16" height="16" viewBox="0 0 16 16"><path d="M0 2l7-1v6.500H0zM8 1l8-1v7.500H8zM0 8.500h7V15l-7-1zM8 8.500h8V16l-8-1z" fill="#fff" /></svg>
        </WinButton>
        <SearchBox>
          <svg width="17" height="17" viewBox="0 0 17 17"><circle cx="10.500" cy="6" r="5.300" fill="none" stroke="#333" strokeWidth="1.300" /><path d="M6.500 10L.5 16.500" stroke="#333" strokeWidth="1.300" /></svg>
          <SearchInput aria-label="Search" placeholder="Type here to search" />
        </SearchBox>
        {tasks.map((t) => (
          <TaskButton key={t.name} aria-label={t.name} $state={t.state}>
            {t.state === "active" ? <Logo size={24} paper /> : <TaskIcon name={t.name} />}
          </TaskButton>
        ))}
        <Tray>
          <TrayButton $wide>
            <svg width="21" height="20" viewBox="0 0 21 20">
              <circle cx="10.500" cy="9" r="8.500" fill="#f9b52c" />
              <path d="M4 18a3 3 0 010-6h2q3-3 6 0h6a3 3 0 010 6z" fill="#d9b98c" />
              <path d="M5 14q3-3 6-1h7" fill="none" stroke="#f3e3cb" strokeWidth="1.500" />
            </svg>
            30°C
          </TrayButton>
          <TrayButton aria-label="Hidden icons">
            <svg width="12" height="8"><path d="M.5 7L6 1.500 11.500 7" fill="none" stroke="#fff" strokeWidth="1.300" /></svg>
          </TrayButton>
          <TrayButton aria-label="Network">
            <svg width="17" height="14" viewBox="0 0 17 14"><path d="M5 2.500h11v7H4.500V5M10.500 9.500V13M7 13h7M1 1.500h4v3H1zM3 4.500V13M2 13h3" fill="none" stroke="#fff" /></svg>
          </TrayButton>
          <TrayButton aria-label="Volume">
            <svg width="17" height="14" viewBox="0 0 17 14"><path d="M1 5h2.500L7 2v10L3.500 9H1zM9 5q1.500 2 0 4M11 3.500q3 3.500 0 7M13.500 2q4 5 0 10" fill="none" stroke="#fff" /></svg>
          </TrayButton>
          <Clock>3:24 PM<br />10/27/2021</Clock>
          <TrayButton aria-label="Notifications">
            <svg width="17" height="17" viewBox="0 0 17 17"><path d="M.5.500h16v12h-6L8 15.500 5.500 12.500h-5z" fill="none" stroke="#fff" /></svg>
          </TrayButton>
          <ShowDesktop aria-label="Show desktop" />
        </Tray>
      </Taskbar>
    </Desktop>
  );
}
